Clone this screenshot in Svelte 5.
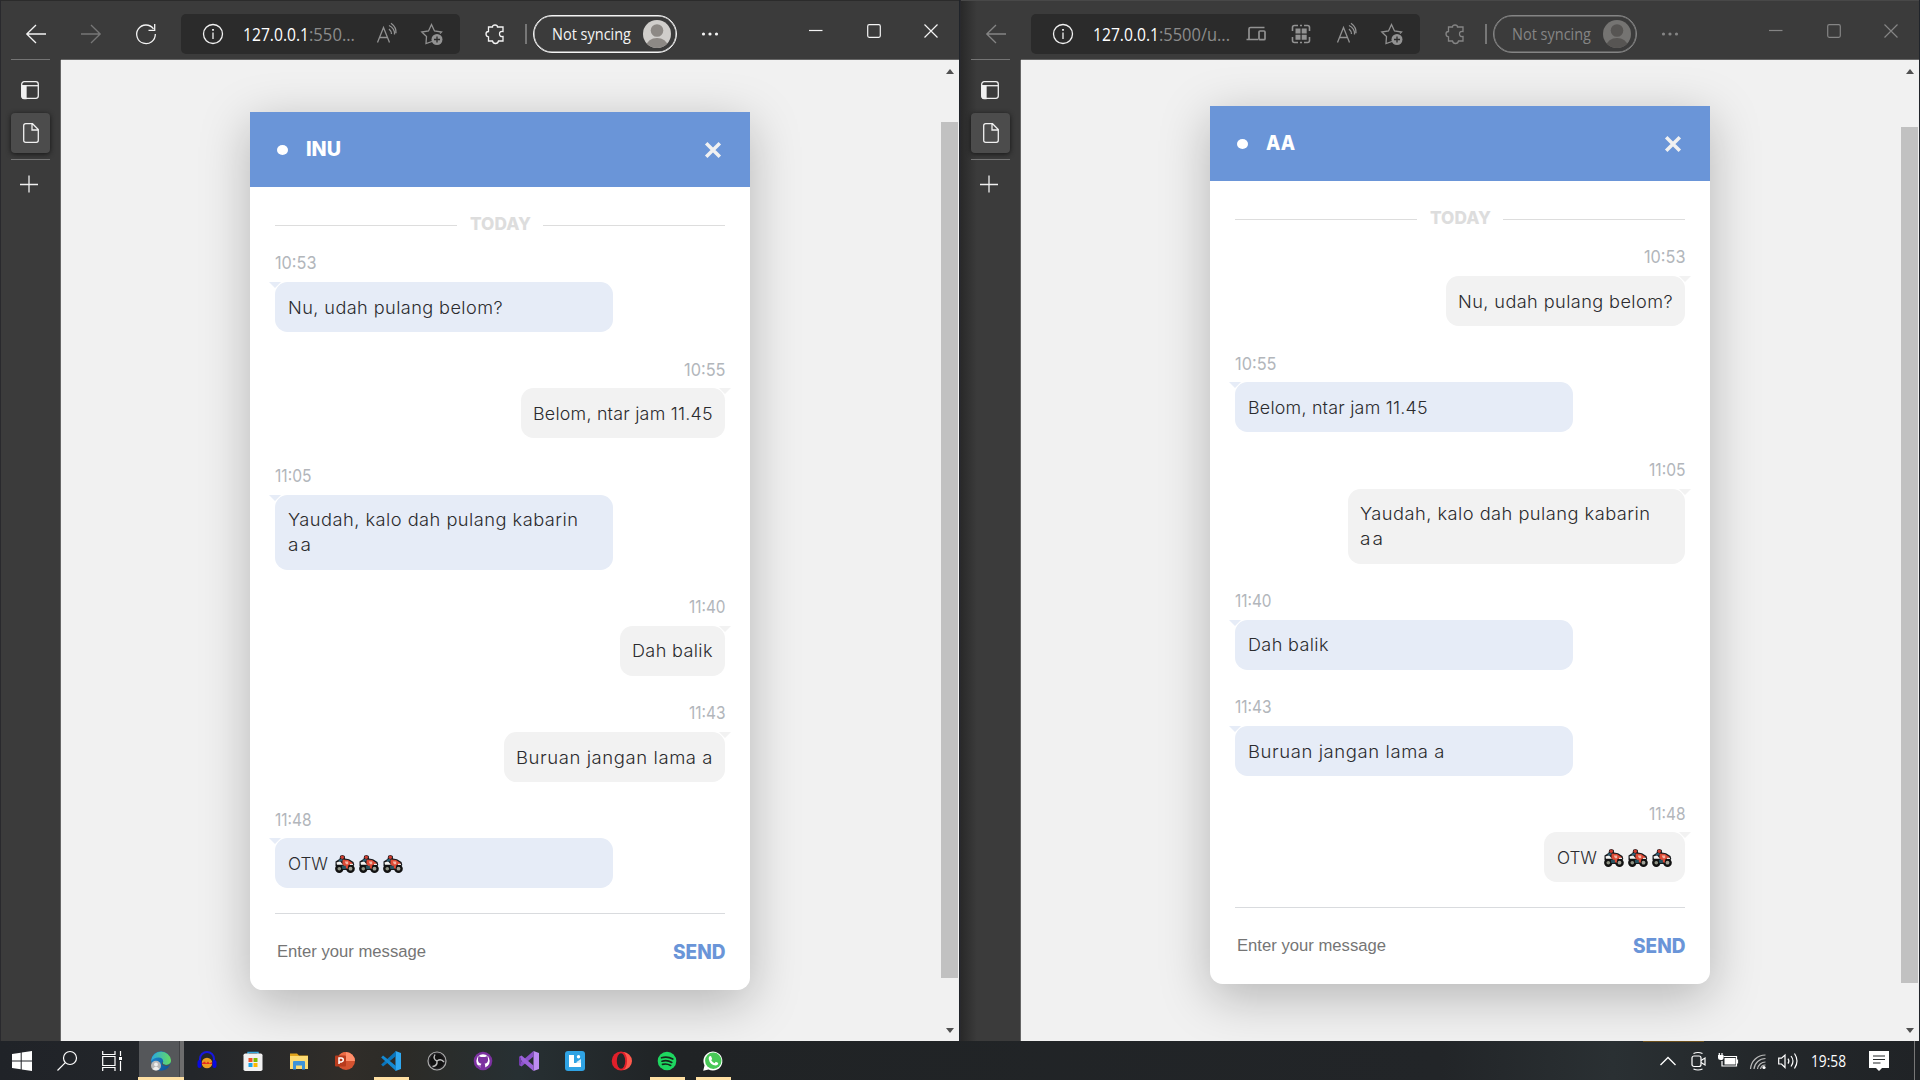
<script>
  const chat = [
    { time: '10:53', tw: 41.5, from: 'AA', lines: [['Nu, udah pulang belom?', 214.5]] },
    { time: '10:55', tw: 41.5, from: 'INU', lines: [['Belom, ntar jam 11.45', 179.5]] },
    { time: '11:05', tw: 36.5, from: 'AA', lines: [['Yaudah, kalo dah pulang kabarin', 290], ['aa', 23]], wide: true },
    { time: '11:40', tw: 36.5, from: 'INU', lines: [['Dah balik', 80.5]] },
    { time: '11:43', tw: 36.5, from: 'INU', lines: [['Buruan jangan lama a', 196.5]] },
    { time: '11:48', tw: 36.5, from: 'AA', lines: [['OTW', 40]], bikes: 3 }
  ];

  const windows = [
    { title: 'INU', titleWidth: 35, me: 'INU', active: true, rest: ':550...', restWidth: 46 },
    { title: 'AA', titleWidth: 29, me: 'AA', active: false, rest: ':5500/u...', restWidth: 71 }
  ];

  // Fills the given width: narrow labels are widened half by glyph width and
  // half by letter spacing, wide ones are condensed.
  function fit(node, width) {
    const natural = node.getBoundingClientRect().width;
    const ratio = width / natural;
    const scale = ratio > 1 ? Math.sqrt(ratio) : ratio;
    const count = Math.max(1, node.textContent.length - 1);
    const spacing = (width / scale - natural) / count;
    node.style.letterSpacing = spacing + 'px';
    node.style.transform = `scaleX(${scale})`;
    node.style.marginRight = width - (natural + spacing * node.textContent.length) + 'px';
  }
</script>

{#snippet bike()}
  <svg class="bike" viewBox="0 0 20 18">
    <path d="M4.500 4 5.200 .8 7.500 0 9.800 1 10 3.500 14 4.200 18.500 7 19.300 10 14 15H6L.5 11V6.500z" fill="#17191c" />
    <circle cx="4.300" cy="13.700" r="4.200" fill="#121212" /><circle cx="15.500" cy="13.700" r="4.300" fill="#121212" />
    <circle cx="4.300" cy="13.700" r="1.800" fill="#8f9384" /><circle cx="15.500" cy="13.700" r="1.900" fill="#a2a398" />
    <path d="M1.500 7.500 5 6.300 8 9.800 2 9.800z" fill="#f5f5f3" />
    <path d="M7.500 4.500 13 5 17.500 8 17 9.500 13.500 10 12.500 14 10.500 13 7.500 9z" fill="#dd4a35" />
    <path d="M9.800 6.500h3.400v2.800h-2.200z" fill="#f3b5a5" />
    <path d="M15 8.800h3v1.200h-3z" fill="#e9e6e2" />
    <path d="M3.500 5 7 3.500 7.500 6 4.500 6.800z" fill="#2d5d72" /><path d="M6.800 10.800h4v3.200h-3.500z" fill="#265360" />
    <circle cx="7.300" cy="2.200" r="1.700" fill="#cf3d30" />
  </svg>
{/snippet}

{#snippet card(win)}
  <section class="card">
    <header class="card-head">
      <i class="dot"></i>
      <b><span class="fit" use:fit={win.titleWidth}>{win.title}</span></b>
      <svg class="x" viewBox="0 0 18 18"><path d="M2.200 2.200 15.800 15.800M15.800 2.200 2.200 15.800" /></svg>
    </header>
    <div class="today"><i></i><b><span class="fit" use:fit={61}>TODAY</span></b><i></i></div>
    <div class="list">
      {#each chat as m}
        <div class="msg" class:mine={m.from === win.me}>
          <div class="time"><span class="fit" use:fit={m.tw}>{m.time}</span></div>
          <div class="bubble" class:wide={m.wide}>
            {#each m.lines as line}
              <p><span class="fit" use:fit={line[1]}>{line[0]}</span>{#if m.bikes}<span class="bikes">{@render bike()}{@render bike()}{@render bike()}</span>{/if}</p>
            {/each}
          </div>
        </div>
      {/each}
    </div>
    <footer class="card-foot">
      <span class="ph"><span class="fit" use:fit={149}>Enter your message</span></span>
      <b><span class="fit" use:fit={52.5}>SEND</span></b>
    </footer>
  </section>
{/snippet}

<div class="desktop">
  <div class="windows">
    {#each windows as win}
      <div class="window" class:inactive={!win.active}>
        <div class="toolbar">
          <svg class="ic back" viewBox="0 0 20 20"><path d="M20 10H.8M10 1 .8 10l9.200 9" /></svg>
          {#if win.active}
            <svg class="ic fwd" viewBox="0 0 20 20"><path d="M0 10h19.200M10 1l9.200 9-9.200 9" /></svg>
            <svg class="ic reload" viewBox="0 0 20 20"><path d="M17.500 4.800A9.300 9.300 0 1 0 19.300 10M18.700 0V6.300H12.500" /></svg>
          {/if}
          <div class="address">
            <svg class="ic info" viewBox="0 0 22 22"><circle cx="11" cy="11" r="9.500" /><path d="M11 9.500V16" /><path d="M11 6v1.800" stroke-width="1.800" /></svg>
            <span class="url"><span class="host fit" use:fit={66}>127.0.0.1</span><span class="rest fit" use:fit={win.restWidth}>{win.rest}</span></span>
            <span class="tools">
              {#if !win.active}
                <svg class="ic" viewBox="0 0 24 24"><path d="M20.500 5.500H6.500q-1.500 0-1.500 1.500v10.500M2.500 17.500H14" stroke-width="1.700" /><rect x="15" y="9" width="6" height="8.700" rx="1" stroke-width="1.700" /></svg>
                <svg class="ic" viewBox="0 0 24 24"><path d="M3.500 9V5.500q0-2 2-2H9M15 3.500h3.500q2 0 2 2V9M20.500 15v3.500q0 2-2 2H15M9 20.500H5.500q-2 0-2-2V15M11 3.500h2M11 20.500h2" stroke-width="1.600" /><path d="M6.500 6.500h5v5h-5zM12.700 6.500h5v5h-5zM6.500 12.700h5v5h-5zM12.700 12.700h5v5h-5z" class="solid" /></svg>
              {/if}
              <svg class="ic" viewBox="0 0 24 24"><path d="M2.500 20 8.500 5l6 15M4.500 15h8M14 6.500q2.500 2 2.500 5M14 3q6 3 5.500 9M16 .8q5.500 4 5 10" transform="translate(0 .5)" /></svg>
              <svg class="ic" viewBox="0 0 24 24"><path d="M12 19.500 6 21.500 6.500 14.500 1.800 10 8.500 9 11.500 2.500 14.500 9 21.500 10 20 11.500" /><circle cx="17" cy="17.500" r="5.500" class="solid" /><path d="M17 14.500v6M14 17.500h6" stroke="#2b2b2b" class="cross" /></svg>
            </span>
          </div>
          <svg class="ic ext" viewBox="0 0 20 20"><path d="M3.500 3H7.500Q7.500 1 10 1t2.500 2H18V7.500Q14.500 7 14.500 10T18 12.500V17H13.500Q13 19.500 10.500 19.500T7.500 17H3.500V12.800Q1 12.500 1 10T3.500 7.500z" /></svg>
          <i class="bar"></i>
          <div class="profile">
            <span class="fit" use:fit={79}>Not syncing</span>
            <svg viewBox="0 0 28 28"><clipPath id={'face' + win.title}><circle cx="14" cy="14" r="14" /></clipPath><g clip-path={`url(#face${win.title})`}><rect width="28" height="28" class="face" /><circle cx="14" cy="10.500" r="6.300" class="body" /><ellipse cx="14" cy="26" rx="10.500" ry="8" class="body" /></g></svg>
          </div>
          <svg class="more" viewBox="0 0 18 6"><circle cx="2.500" cy="3" r="1.600" /><circle cx="9" cy="3" r="1.600" /><circle cx="15.500" cy="3" r="1.600" /></svg>
          <div class="controls">
            <svg viewBox="0 0 14 14"><path d="M0 6.500h13.500" /></svg>
            <svg viewBox="0 0 14 14"><rect x=".7" y=".7" width="12.600" height="12.600" rx="1.500" /></svg>
            <svg viewBox="0 0 14 14"><path d="M.5.5 13.500 13.500M13.500.5.5 13.500" /></svg>
          </div>
        </div>
        <div class="content">
          <aside>
            <i class="line"></i>
            <svg class="tabs" viewBox="0 0 18 18"><rect x=".7" y=".7" width="16.600" height="16.600" rx="2.500" /><path d="M1 4.700H17" /><path d="M1 5h4v12.500H3q-2 0-2-2z" class="solid" /></svg>
            <div class="tile"><svg viewBox="0 0 16 20"><path d="M2.700.7H9.500L15.300 6.500V17.300q0 2-2 2H2.700q-2 0-2-2V2.700q0-2 2-2zM9 1V7H15" /></svg></div>
            <i class="line"></i>
            <svg class="plus" viewBox="0 0 18 18"><path d="M0 9.500H18M9 .5V17.500" /></svg>
          </aside>
          <main>{@render card(win)}</main>
          <div class="scroll"><i class="up"></i><i class="thumb"></i><i class="down"></i></div>
        </div>
      </div>
    {/each}
  </div>

  <nav class="taskbar">
    <div class="sys"><svg viewBox="0 0 20 20"><path d="M0 3 8.700 1.800V9.500H0zM9.700 1.600 20 0v9.500H9.700zM0 10.500H8.700v7.800L0 17zM9.700 10.500H20V20L9.700 18.500z" fill="#fff" /></svg></div>
    <div class="sys"><svg viewBox="0 0 20 20" class="stroke"><circle cx="13" cy="7" r="6.500" /><path d="M8.300 11.700.5 19.500" /></svg></div>
    <div class="sys"><svg viewBox="0 0 20 20" class="stroke"><path d="M.7 0V3.500H13V0M.7 5.500H13v9H.7zM.7 20V16.500H13V20M18.500 0V5M18.500 10V20" /><path d="M17 6h3v3h-3z" fill="#fff" stroke="none" /></svg></div>
    <div class="app current"><svg viewBox="0 0 20 20">
      <defs><linearGradient id="e1"><stop stop-color="#2aa8df" /><stop offset="1" stop-color="#66dc61" /></linearGradient><linearGradient id="e2" x2="1" y2="1"><stop stop-color="#1e8ed6" /><stop offset="1" stop-color="#0d4c93" /></linearGradient></defs>
      <circle cx="10" cy="10" r="9.800" fill="url(#e2)" /><path d="M.3 9A10 10 0 0 1 20 9q.3 5-5 5-5-.5-2.800-3.500Q12 6.500 7.500 6.500 2.500 6.500.3 10z" fill="url(#e1)" /><path d="M12.200 10.500Q10.500 13.500 15 14q3 0 4.500-2.300L18 14.500q-3.500 1.500-6.500-.5-1.500-2 .7-3.500z" fill="#4b5255" /><circle cx="5" cy="14.800" r="5" fill="#b9b9b9" /><circle cx="5" cy="13.400" r="1.900" fill="#eee" /><path d="M1.700 18q3.300-5 6.600 0-3.300 2.500-6.600 0z" fill="#eee" /></svg></div>
    <div class="app"><svg viewBox="0 0 20 20"><path d="M3 12V8a7 7 0 0 1 14 0v4" fill="none" stroke="#1717df" stroke-width="2" /><circle cx="10" cy="12" r="5.300" fill="#eb9d22" /><path d="M5 12 8 10.500l1 2 2-2 1.500 2L15 11v2H5z" fill="#e32920" /><rect x=".5" y="9" width="4" height="8" rx="2" fill="#0a0ae0" /><rect x="15.500" y="9" width="4" height="8" rx="2" fill="#0a0ae0" /></svg></div>
    <div class="app"><svg viewBox="0 0 20 20"><path d="M5 4.500V1.500H15V4.500" fill="none" stroke="#35a9e0" stroke-width="1.400" /><rect x=".5" y="2.500" width="19" height="17.500" rx="1.800" fill="#f1f1f1" /><path d="M5.500 7h4v4h-4z" fill="#ef5028" /><path d="M10.500 7h4v4h-4z" fill="#7eb900" /><path d="M5.500 12h4v4h-4z" fill="#1aa4ec" /><path d="M10.500 12h4v4h-4z" fill="#feb801" /></svg></div>
    <div class="app"><svg viewBox="0 0 20 20"><path d="M1 17.500V2.500h7l2 2h9v13z" fill="#e2a51c" /><path d="M1 5h18v13H1z" fill="#fddb72" /><path d="M4 18.500V11q0-1 1-1h10q1 0 1 1v7.500h-3v-4H7v4z" fill="#3e93d8" /></svg></div>
    <div class="app"><svg viewBox="0 0 20 20"><circle cx="11" cy="10" r="9" fill="#d35230" /><path d="M11 1a9 9 0 0 1 9 9H11z" fill="#ff8f6b" /><path d="M11 1a9 9 0 0 0-8 5l8 4z" fill="#ed6c47" /><rect x="0" y="4.500" width="11" height="11" rx="1" fill="#b83b1d" /><path d="M4 13V7h2.300a1.900 1.900 0 0 1 0 3.900H4" fill="none" stroke="#fff" stroke-width="1.500" /></svg></div>
    <div class="app open"><svg viewBox="0 0 20 20"><path d="M14.500 0 20 2V18l-5.500 2z" fill="#30a8f0" /><path d="M15 0v5L2 15.500.2 13.500z" fill="#0a75bc" /><path d="M15 20V15L2 4.500.2 6.500z" fill="#1489d2" /></svg></div>
    <div class="app"><svg viewBox="0 0 20 20"><circle cx="10" cy="10" r="9" fill="#232225" stroke="#aaa" stroke-width="1.200" /><circle cx="10" cy="10" r="7" fill="#111" /><path d="M10 10Q5.500 8 8 3.500M10 10q4-3 7 1M10 10q.5 5-4.500 5.500" fill="none" stroke="#bbb" stroke-width="1.400" /></svg></div>
    <div class="app"><svg viewBox="0 0 20 20"><circle cx="10" cy="10" r="9.300" fill="#7c31a0" /><circle cx="10" cy="10" r="6.700" fill="#fff" /><path d="M5.500 5 8 6h4l2.500-1 .5 3q.5 4-3.500 4.800.7.700.7 2V18H7.800v-2.200q-2 .2-3-1.800 1.500.8 3 .3 0-1 .7-1.500Q4.500 12 5 8z" fill="#7c31a0" /></svg></div>
    <div class="app"><svg viewBox="0 0 20 20"><path d="M14.500 0 20 2V18l-5.500 2z" fill="#bd8cf3" /><path d="M14.500 0v5.500L2.500 15.500 0 14V12.500z" fill="#8b51c9" /><path d="M14.500 20V14.500L2.500 4.500 0 6V7.500z" fill="#9c63da" /><path d="M0 5.500 2 7v6L0 14.500z" fill="#713bab" /></svg></div>
    <div class="app"><svg viewBox="0 0 20 20"><rect width="20" height="20" rx="3" fill="#2fa3e4" /><path d="M4 4h5v8h7v4H4z" fill="#fff" /><path d="M11.500 11 16 8v4h-4.500z" fill="#d9effc" /><circle cx="13.500" cy="5.800" r="1.700" fill="#fff" /></svg></div>
    <div class="app"><svg viewBox="0 0 20 20"><ellipse cx="10" cy="10" rx="9.300" ry="9.500" fill="#e01f2a" /><path d="M12 1a9 9 0 0 1 0 18q4-2 4-9T12 1z" fill="#ff5a4d" /><ellipse cx="10" cy="10" rx="4.200" ry="7.800" fill="#232629" /></svg></div>
    <div class="app open"><svg viewBox="0 0 20 20"><circle cx="10" cy="10" r="9.300" fill="#1ed760" /><path d="M4.500 6.800q6-1.700 11.300 1.200M5 10.200q5.300-1.500 9.800 1.200M5.500 13.300q4.500-1 8.200 1.100" fill="none" stroke="#16251b" stroke-width="1.700" stroke-linecap="round" /></svg></div>
    <div class="app open"><svg viewBox="0 0 20 20"><path d="M.2 19.800 1.500 14.500A9.500 9.500 0 1 1 5.500 18.500z" fill="#fff" /><circle cx="10.300" cy="9.700" r="8.200" fill="#48c857" /><path d="M6.500 5.200 8 5l1.200 3-1 1.300q1.200 2 3.300 2.900l1.300-1.400 2.500 1.300q0 2.400-2.500 2.500Q7 14 5.700 8q0-2 .8-2.800z" fill="#fff" /></svg></div>

    <div class="tray stroke">
      <svg viewBox="0 0 20 20"><path d="M2.500 14 10 6.500 17.500 14" stroke-width="1.300" /></svg>
      <svg viewBox="0 0 20 20"><rect x="4" y="5" width="9" height="10.500" rx="2" /><path d="M13 9.500 17 7v7l-4-2.500M5.500 2.500Q10 .5 14.500 2.500M5.500 18Q10 20 14.500 18" /></svg>
      <svg viewBox="0 0 20 20"><path d="M5.500 5.500h13v9.500H4V10M19.500 8.500v4" /><path d="M6.500 7h11v6.500h-11z" fill="#fff" stroke="none" /><path d="M0 4h5.500v3Q5.500 9 2.700 9 0 9 0 7z" fill="#fff" stroke="none" /><path d="M1.300 2v2M4 2v2" /></svg>
      <svg viewBox="0 0 20 20"><path d="M2.500 18A15 15 0 0 1 17.500 4M6 18A11.500 11.500 0 0 1 17.500 7.500M9.500 18A8 8 0 0 1 17.500 11M12.500 18A5 5 0 0 1 17.500 14" stroke="#bbb" /><circle cx="16" cy="16.500" r="1.600" fill="#fff" stroke="none" /></svg>
      <svg viewBox="0 0 20 20"><path d="M.7 7.200H3.500L7 4V16.500L3.500 13H.7zM10 7.700q1.800 2.500 0 5M13 5q4 5 0 10.500M16.500 2.500q5 7.500 0 15" /></svg>
      <span class="clock"><span class="fit" use:fit={35}>19:58</span></span>
      <svg class="note" viewBox="0 0 20 20"><path d="M0 0H20V17H13l-3 3-3-3H0z" fill="#fff" stroke="none" /><path d="M4 5H16M4 8.500H16M4 12H11.500" stroke="#24282a" stroke-width="1.200" /></svg>
      <i class="peek"></i>
    </div>
    <i class="amber"></i>
  </nav>
</div>

<style>
  :global(body) { margin: 0; overflow: hidden; background: #222528; }
  .desktop { width: 1920px; height: 1080px; display: flex; flex-direction: column; font-family: Inter, "Open Sans", sans-serif; }
  svg { display: block; flex: none; overflow: visible; }
  i { display: block; }
  p { margin: 0; }
  .fit { display: inline-block; white-space: nowrap; transform-origin: left center; }

  .windows { display: flex; height: 1041px; }
  .window { width: 960px; height: 1041px; box-sizing: border-box; border-left: 1px solid #29292d; border-right: 1px solid #20242a; display: flex; flex-direction: column; background: #3b3b3b; --fg: #f4f4f4; }
  .inactive { --fg: #858585; background: linear-gradient(90deg, #292929, #3b3b3b 16px); }
  .toolbar { height: 60px; box-sizing: border-box; border-top: 1px solid #2b2b2b; display: flex; align-items: center; padding: 7px 0 0 25px; }
  .inactive .toolbar { border-top-color: #484848; }
  .ic { width: 20px; height: 20px; fill: none; stroke: var(--fg); stroke-width: 1.3; }
  .back, .fwd, .reload { margin-top: -1px; }
  .fwd { margin-left: 35px; stroke: #777; }
  .reload { margin-left: 35px; }
  .address { width: 279px; height: 40px; margin-left: 25px; box-sizing: border-box; border-radius: 5px; background: #2b2b2b; display: flex; align-items: center; padding: 0 16px 0 21px; }
  .inactive .address { width: 389px; }
  .info { width: 22px; height: 22px; stroke: #f1f1f1; }
  .url { margin-left: 19px; font: 17.5px/24px "Open Sans", sans-serif; white-space: nowrap; padding-bottom: 1px; }
  .host { color: #fff; }
  .rest { color: #8c8c8c; }
  .tools { margin-left: auto; display: flex; gap: 21.5px; }
  .tools .ic { width: 24px; height: 24px; stroke: #929292; }
  .tools .solid { fill: #929292; stroke: none; }
  .tools .cross { stroke: #2b2b2b; }
  .ext { margin-left: 25px; }
  .bar { width: 2px; height: 20px; margin-left: 20px; background: #777; }
  .profile { width: 144px; height: 38px; box-sizing: border-box; margin-left: 6px; border: 1px solid var(--fg); box-shadow: inset 0 0 0 .5px var(--fg); border-radius: 20px; display: flex; align-items: center; justify-content: space-between; padding: 0 5px 0 18px; color: var(--fg); font: 15.5px/24px "Open Sans", sans-serif; }
  .profile svg { width: 28px; height: 28px; }
  .face { fill: #d0cecb; }
  .body { fill: #8d8985; }
  .inactive .face { fill: #757472; }
  .inactive .body { fill: #575553; }
  .more { width: 18px; height: 6px; margin-left: 24px; fill: var(--fg); }
  .controls { display: flex; gap: 43.500px; margin: -7px 0 0 90px; }
  .controls svg { width: 14px; height: 14px; fill: none; stroke: var(--fg); stroke-width: 1.2; }

  .content { flex: 1; display: flex; min-height: 0; }
  aside { width: 60px; box-sizing: border-box; border-right: 1px solid #666; display: flex; flex-direction: column; align-items: center; padding-right: 1px; }
  aside .line { width: 39px; height: 1px; background: #747474; margin-top: -1px; flex: none; }
  aside svg { fill: none; stroke: #f0f0f0; stroke-width: 1.3; }
  .tabs { width: 18px; height: 18px; margin: 21px 1px 14px 0; }
  .tabs .solid { fill: #f0f0f0; }
  .tile { width: 39px; height: 40px; border-radius: 4px; background: #4c4c4c; box-shadow: 0 1px 5px #151515; display: flex; align-items: center; justify-content: center; flex: none; }
  .tile svg { width: 16px; height: 20px; margin-left: 1px; }
  .tile + .line { margin-top: 6px; }
  .plus { width: 18px; height: 18px; margin: 15px 2px 0 0; }
  main { width: 880px; overflow: hidden; box-sizing: border-box; border-top: 1px solid #666; margin-top: -1px; padding: 52px 0 0 189px; background: #f1f1f1; }
  .inactive main { padding-top: 46px; }
  .scroll { width: 18px; background: #f1f1f1; border-top: 1px solid #666; margin-top: -1px; display: flex; flex-direction: column; align-items: center; }
  .up { border: 4.500px solid transparent; border-top: 0; border-bottom: 5px solid #505050; margin: 9px 1px 0 0; }
  .thumb { width: 17px; height: 856px; background: #c1c1c1; margin: 48px 1px 0 0; }
  .down { border: 4.500px solid transparent; border-bottom: 0; border-top: 5px solid #505050; margin: 50px 1px 0 0; }
  .inactive .thumb { margin-top: 53px; }
  .inactive .down { margin-top: 45px; }

  .card { width: 500px; height: 878px; background: #fff; border-radius: 0 0 12.500px 12.500px; box-shadow: 0 12.500px 50px rgba(0, 0, 0, .25); }
  .card-head { height: 75px; background: #6a95d8; color: #fff; display: flex; align-items: center; padding: 0 28px 0 27px; }
  .card-head b { font: 800 20px/25px Inter, sans-serif; margin-left: 18px; }
  .dot { width: 11px; height: 10px; border-radius: 50%; background: #fff; }
  .x { width: 18px; height: 18px; margin-left: auto; stroke: #f1f1f1; stroke-width: 3.500; }
  .today { display: flex; align-items: center; justify-content: space-between; padding: 25px 25px 0; height: 25px; color: #ddd; }
  .today i { width: 182px; height: 1px; background: #ddd; margin-top: 2px; }
  .today b { font: 800 17.300px/25px Inter, sans-serif; margin-top: -1px; height: 26px; }
  .list { padding: 1.750px 25px 0; margin-top: -13px; }
  .msg { padding-top: 24.500px; display: flex; flex-direction: column; align-items: flex-start; }
  .time { font-size: 17.500px; line-height: 25px; color: #b2b6bb; margin-bottom: 6.750px; }
  .bubble { position: relative; width: 338px; box-sizing: border-box; padding: 12.500px; border-radius: 12.500px; background: #e6ecf7; color: #2b2b2e; font-size: 17.400px; font-weight: 300; line-height: 25px; }
  .bubble p { display: flex; }
  .bubble::before { content: ''; position: absolute; left: -6px; top: 0; border: 6px solid transparent; border-bottom: 0; border-top-color: #e6ecf7; }
  .mine { align-items: flex-end; }
  .mine .bubble { width: auto; background: #f2f2f2; }
  .mine .bubble.wide { width: 337.500px; }
  .mine .bubble::before { left: auto; right: -6px; border-top-color: #f2f2f2; }
  .bikes { display: flex; gap: 4px; margin: 4px 1px 0 7px; }
  .bike { width: 20px; height: 18px; }
  .card-foot { margin: 25px 25px 0; border-top: 1px solid #d9dbde; height: 75px; display: flex; align-items: center; justify-content: space-between; color: #6a95d8; }
  .ph { color: #757575; font: 16.700px/25px "Liberation Sans", Arial, sans-serif; padding-left: 2px; }
  .card-foot b { font: 800 19.500px/25px Inter, sans-serif; padding-top: 2px; }

  .taskbar { position: relative; height: 39px; display: flex; background: linear-gradient(90deg, #202328, #23262a 10%, #302d29 18%, #2c2b27 21%, #273033 27%, #202325 35%, #222528 75%, #2a3033 84%, #23272a 92%, #202326); }
  .sys, .app { height: 39px; width: 45px; display: flex; align-items: center; justify-content: center; box-sizing: border-box; padding: 1px 1px 0 0; }
  .app { width: 46px; }
  .taskbar svg { width: 20px; height: 20px; }
  .stroke { fill: none; stroke: #fff; stroke-width: 1.2; }
  .current { margin-left: 3px; border: solid #ffe0a3; border-width: 0 0 3px; background: linear-gradient(90deg, transparent 1px, #55575a 1px 41px, #404144 41px 42px, #6d6d6e 42px); padding: 4px 0 0; }
  .open { background: linear-gradient(#ffe0a3, #ffe0a3) center bottom / 35px 3px no-repeat; }
  .tray { margin-left: auto; display: flex; align-items: center; }
  .tray svg { margin-right: 10px; }
  .clock { color: #fff; font: 15.500px/24px "Open Sans", sans-serif; margin: 0 23px 0 3px; }
  .tray .note { margin-right: 25px; }
  .peek { width: 1px; height: 39px; background: #777; margin-right: 5px; }
  .amber { position: absolute; left: 1643px; top: 0; width: 61px; height: 1px; background: #6b4f1c; }
</style>
